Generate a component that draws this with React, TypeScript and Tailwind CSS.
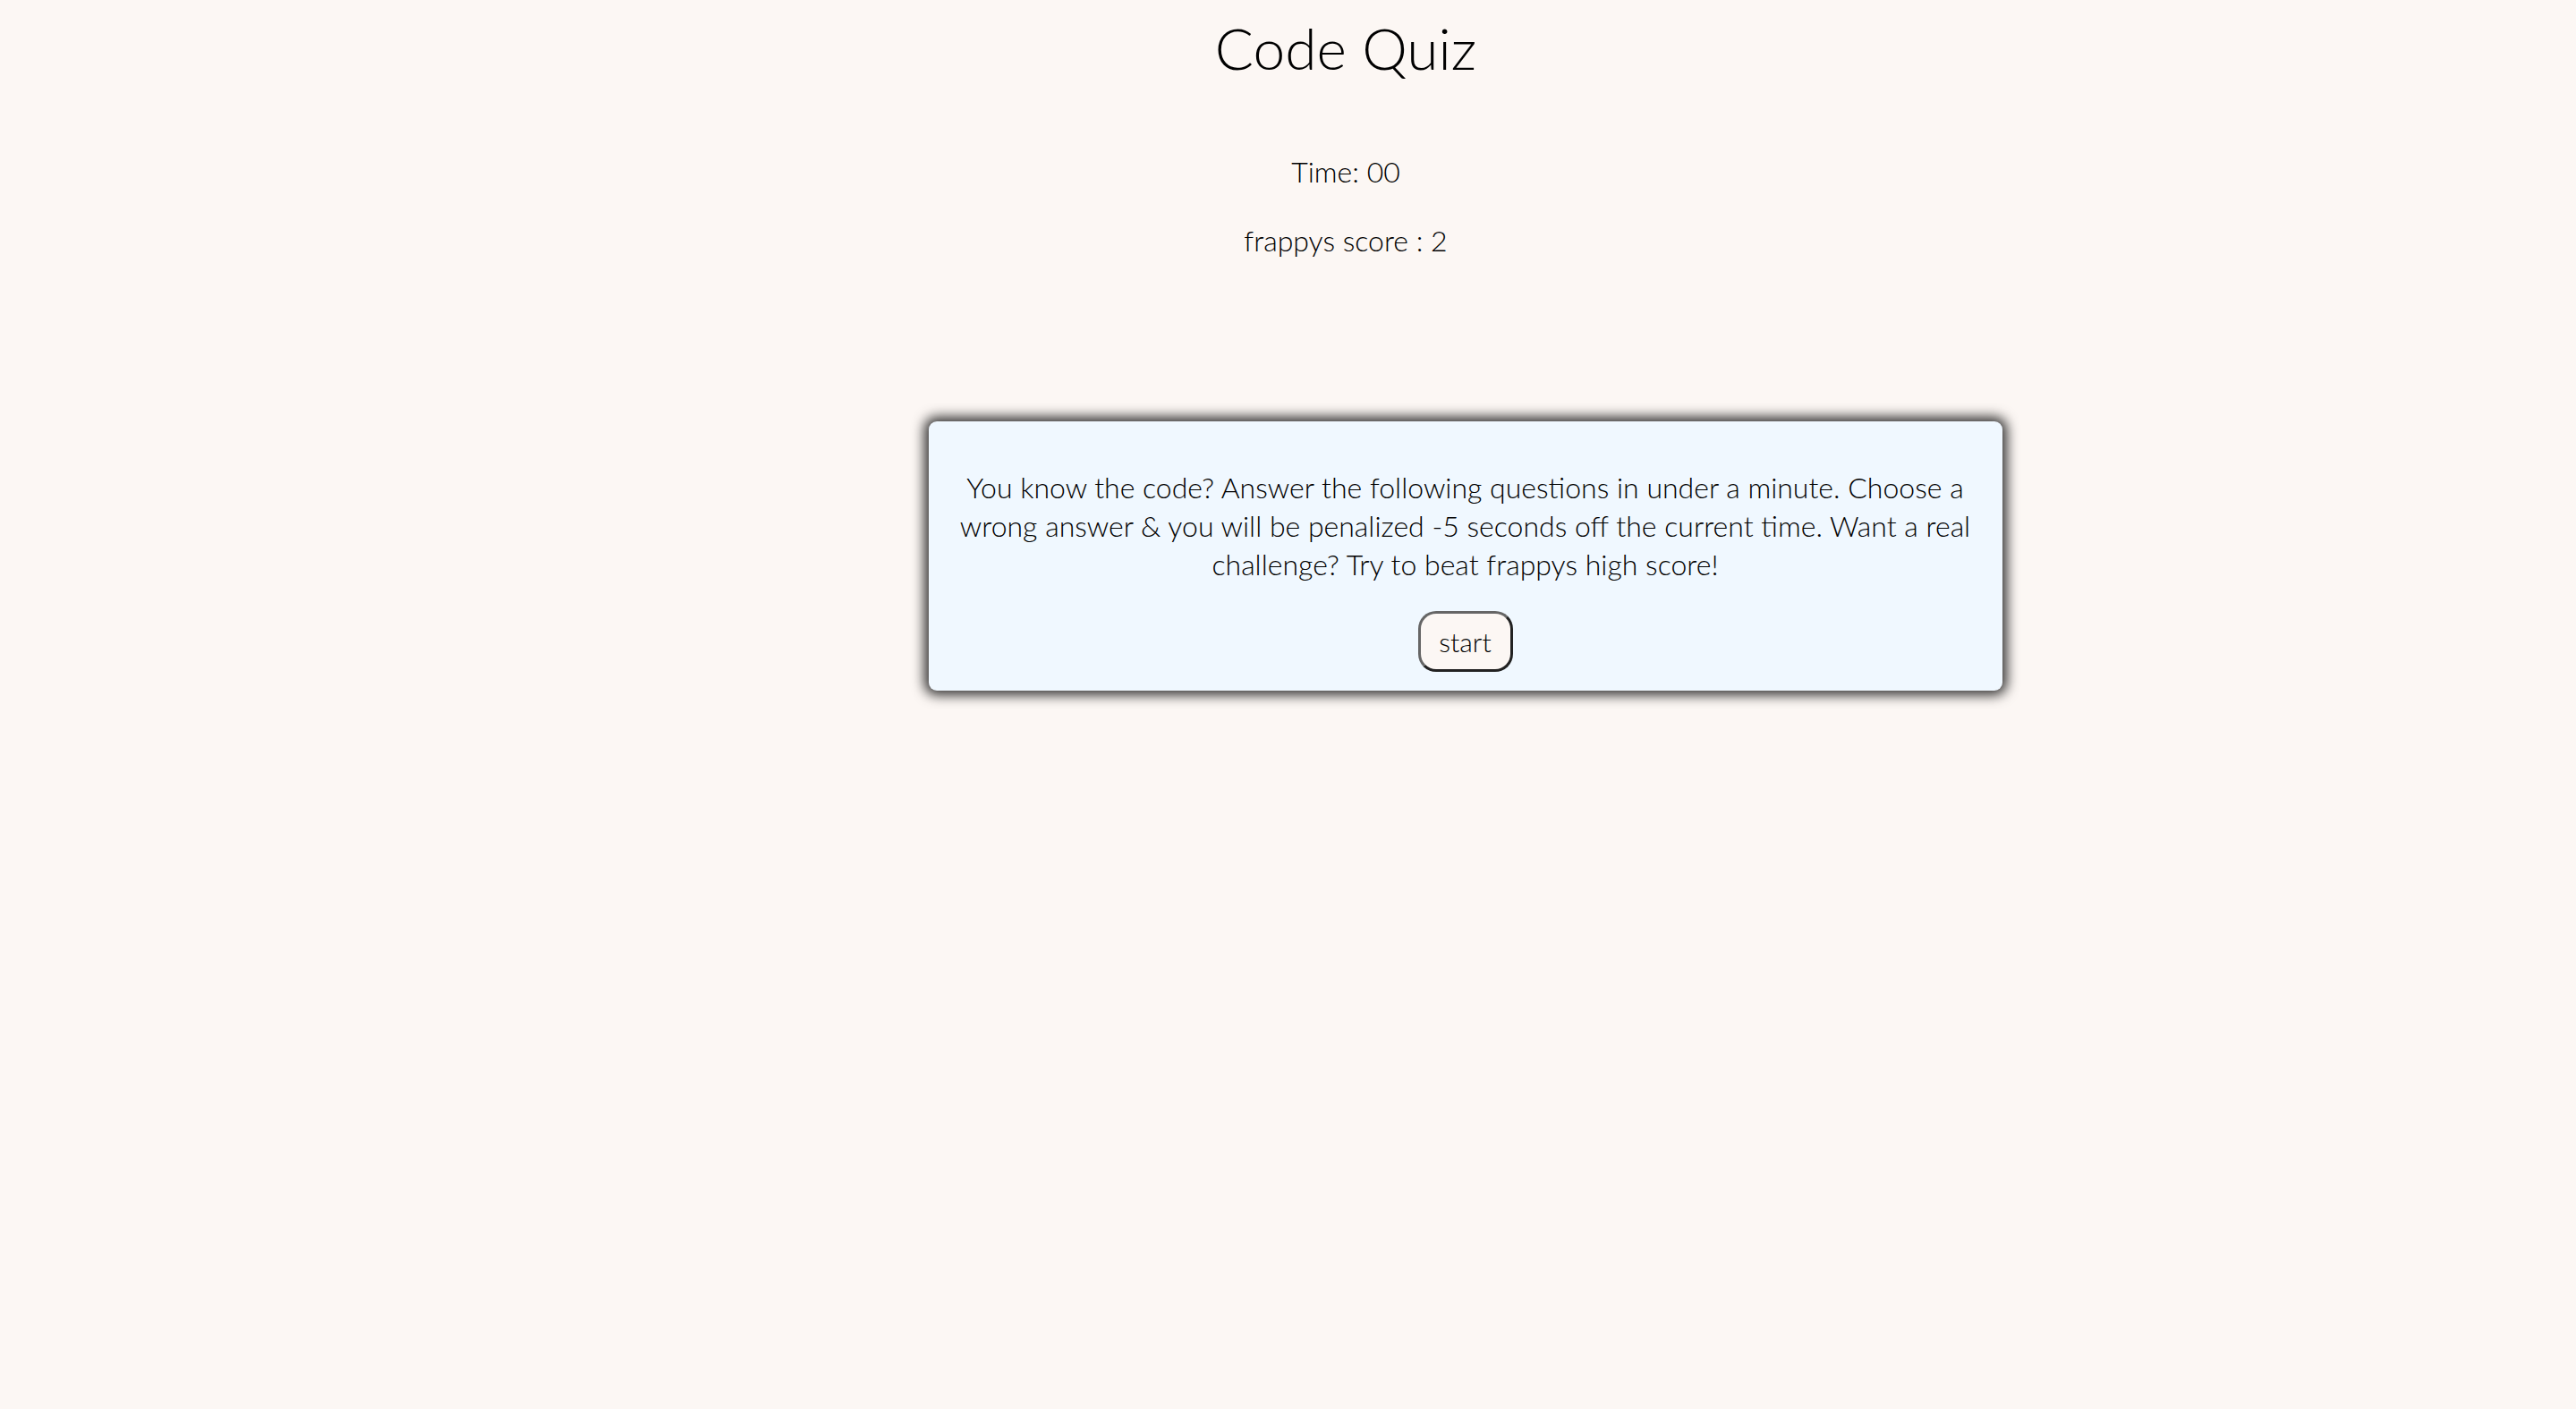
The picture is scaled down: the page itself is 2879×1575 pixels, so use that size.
import React from 'react'

function App() {
  return (
    <div className="min-h-screen w-full bg-[#fcf7f4] text-black font-['Lato','Open_Sans',sans-serif] font-light">
      {/* Header */}
      <div className="flex flex-col items-center pl-[129px] pt-[14px]">
        <h1 className="text-[64px] leading-[80px] font-light">Code Quiz</h1>
        <p className="mt-[78px] text-[32px] leading-[40px]">Time: 00</p>
        <p className="mt-[37px] text-[32px] leading-[40px]">frappys score : 2</p>
      </div>

      {/* Intro card */}
      <div className="flex justify-center pl-[396px] mt-[182px]">
        <div className="w-[1200px] h-[301px] bg-[#f0f8ff] rounded-[9px] shadow-[0_0_14px_5px_rgba(0,0,0,0.8)] flex flex-col items-center px-[26px] pt-[52px]">
          <p className="text-center text-[32px] leading-[43px]">
            You know the code? Answer the following questions in under a minute. Choose a wrong answer &amp; you will be penalized -5 seconds off the current time. Want a real challenge? Try to beat frappys high score!
          </p>
          <button className="mt-[31px] w-[106px] h-[68px] rounded-[20px] border-[3px] border-t-[#666] border-l-[#666] border-r-[#222] border-b-[#222] bg-[#fcf7f4] text-[30px] leading-none">
            start
          </button>
        </div>
      </div>
    </div>
  )
}

export default App
